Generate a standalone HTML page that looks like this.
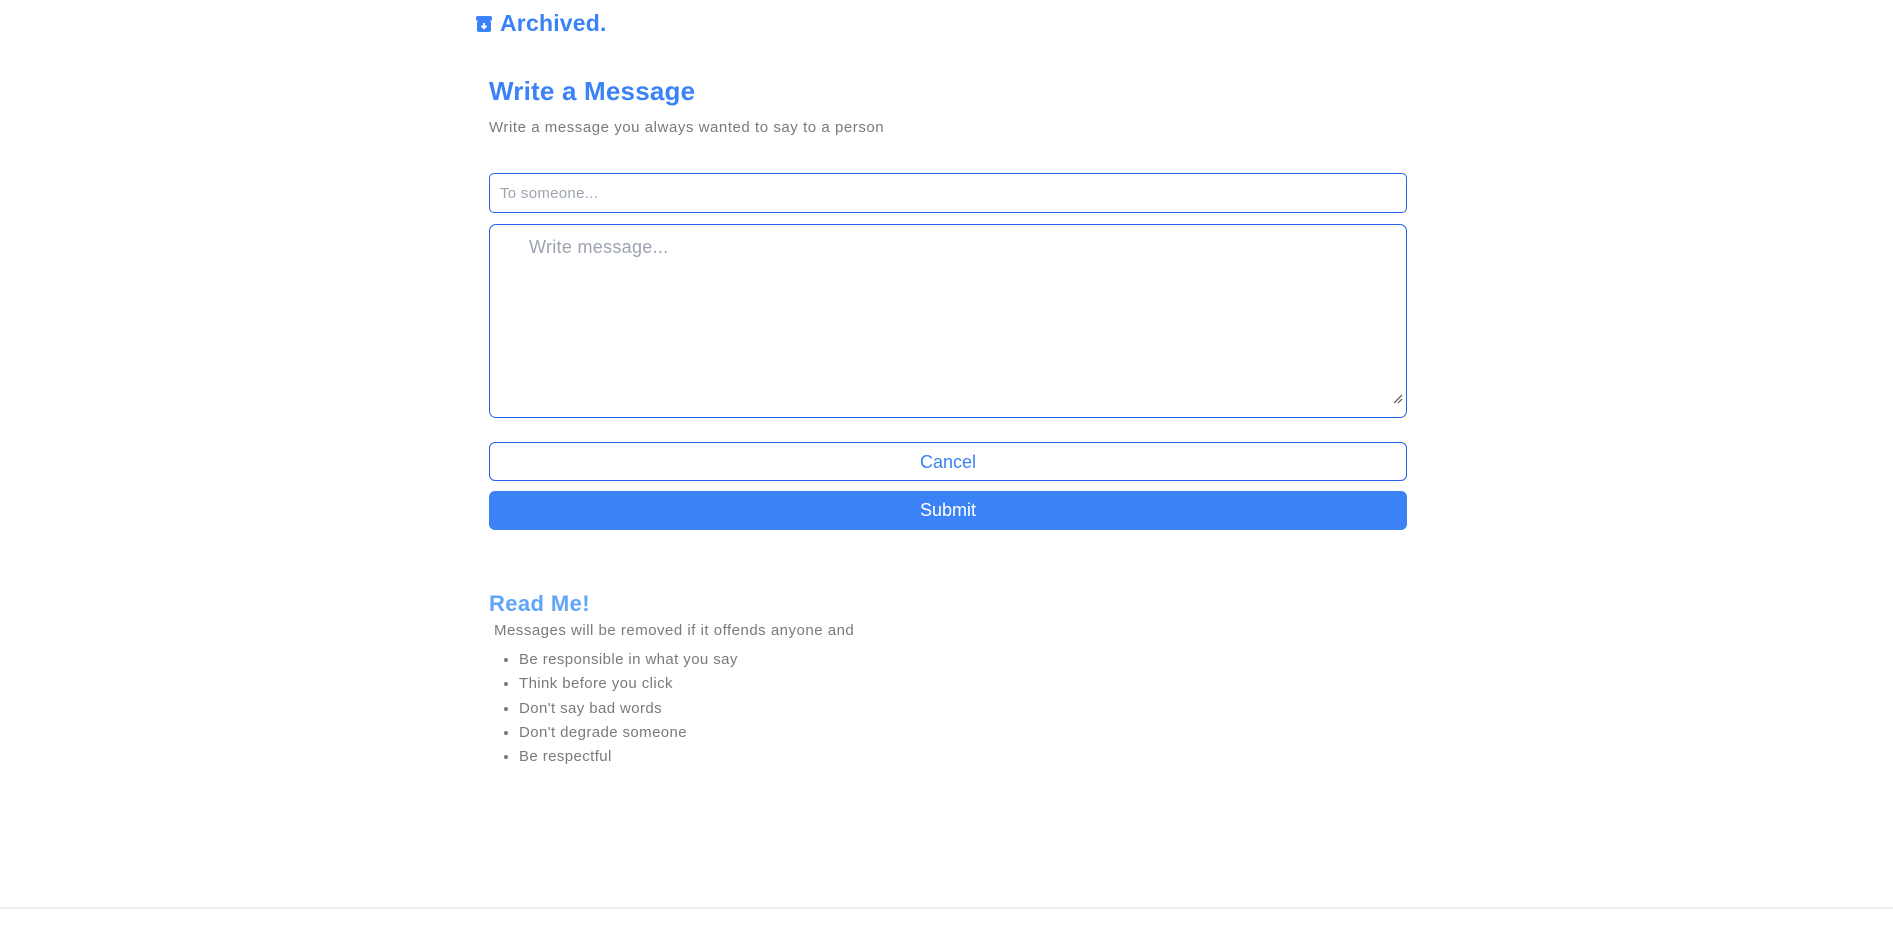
<!DOCTYPE html>
<html><head><meta charset="utf-8"><style>
*{box-sizing:border-box;margin:0;padding:0}
body{width:1893px;height:930px;background:#fff;font-family:"Liberation Sans",sans-serif;position:relative;overflow:hidden}
.a{position:absolute}
.logo{left:500px;top:10px;font-size:23px;font-weight:bold;color:#3b82f6;letter-spacing:0.2px}
h1{position:absolute;left:489px;top:76px;font-size:26px;color:#3b82f6;font-weight:bold;letter-spacing:0.2px}
.sub{left:489px;top:119px;font-size:15px;color:#7a7a7a;letter-spacing:0.55px}
.inp{left:489px;top:173px;width:918px;height:40px;border:1.5px solid #2563eb;border-radius:5px;font-size:15px;color:#9ca3af;padding:11px 10px;letter-spacing:0.3px}
.ta{left:489px;top:224px;width:918px;height:194px;border:1.5px solid #2563eb;border-radius:7px;font-size:18px;color:#9ca3af;padding:12px 39px;letter-spacing:0.3px}
.btn{left:489px;width:918px;height:39px;border-radius:6px;font-size:18px;text-align:center;line-height:38px}
.c{top:442px;border:1.5px solid #2563eb;color:#3b82f6}
.s{top:491px;background:#3b82f6;color:#fff}
.rm{left:489px;top:591px;font-size:22px;font-weight:bold;color:#60a5fa;letter-spacing:0.4px}
.m{left:494px;top:622px;font-size:15px;color:#7a7a7a;letter-spacing:0.5px}
ul{position:absolute;left:519px;top:648px;font-size:15px;color:#7a7a7a;list-style:disc;letter-spacing:0.4px}
li{height:24.3px;line-height:24px}
.foot{left:0;top:907px;width:1893px;height:2px;background:#eee}
</style></head><body>
<svg class="a" style="left:476px;top:16px" width="16" height="16" viewBox="0 0 16 16"><rect x="0" y="0" width="16" height="5" rx="2" fill="#3b82f6"/><rect x="1" y="5" width="14" height="11" rx="2" fill="#3b82f6"/><path d="M8 7v5M5.5 9.8L8 12.3 10.5 9.8" stroke="#fff" stroke-width="1.8" fill="none"/></svg>
<div class="a logo">Archived.</div>
<h1>Write a Message</h1>
<div class="a sub">Write a message you always wanted to say to a person</div>
<div class="a inp">To someone...</div>
<div class="a ta">Write message...</div>
<svg class="a" style="left:1393px;top:394px" width="10" height="10"><path d="M1 9L9 1M5 9L9 5" stroke="#555" stroke-width="1.2"/></svg>
<div class="a btn c">Cancel</div>
<div class="a btn s">Submit</div>
<div class="a rm">Read Me!</div>
<div class="a m">Messages will be removed if it offends anyone and</div>
<ul><li>Be responsible in what you say</li><li>Think before you click</li><li>Don't say bad words</li><li>Don't degrade someone</li><li>Be respectful</li></ul>
<div class="a foot"></div>
</body></html>
